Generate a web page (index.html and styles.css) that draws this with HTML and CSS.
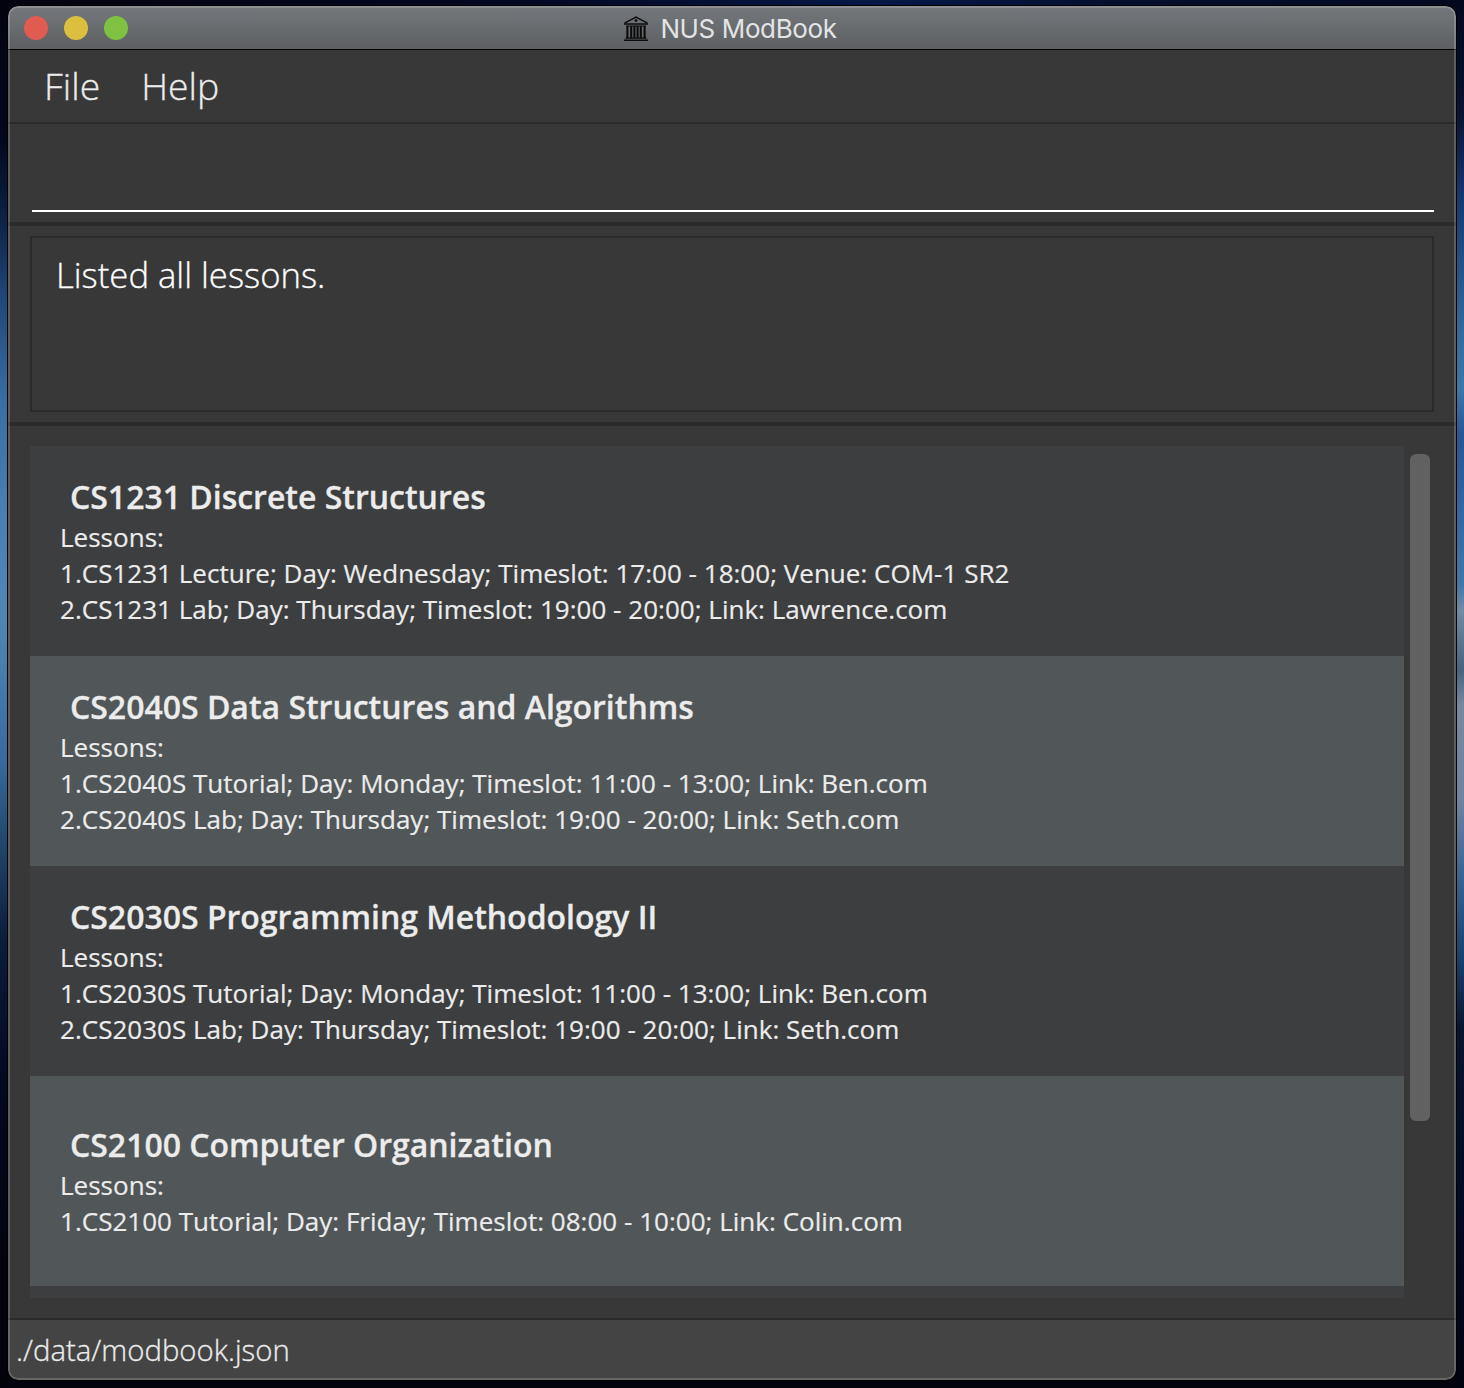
FILE: index.html
```
<!DOCTYPE html>
<html lang="en">
<head>
<meta charset="utf-8">
<title>NUS ModBook</title>
<link rel="stylesheet" href="styles.css">
</head>
<body>
<div class="window">
  <header class="titlebar">
    <div class="lights"><i class="light close"></i><i class="light minimise"></i><i class="light zoom"></i></div>
    <div class="caption">
      <svg class="logo" width="26" height="26" viewBox="0 0 26 26" fill="none" stroke="#0c0c0c">
        <path d="M1.5 7.2 13 1 24.5 7.2" stroke-width="1.5"/>
        <path d="M1 8h24" stroke-width="1.6"/>
        <circle cx="13" cy="4.6" r="1.4" fill="#0c0c0c" stroke="none"/>
        <path d="M3 10h20" stroke-width="1.1"/>
        <path d="M4.4 10v12M8.2 10v12M11.4 10v12M14.6 10v12M17.8 10v12M21.6 10v12" stroke-width="2.1"/>
        <path d="M2.5 22.1h21" stroke-width="1.2"/>
        <path d="M1 24.3h24" stroke-width="1.4"/>
      </svg>
      <span>NUS ModBook</span>
    </div>
  </header>
  <nav class="menu"><span>File</span><span>Help</span></nav>
  <section class="command"><div class="field"></div></section>
  <section class="result"><div class="message">Listed all lessons.</div></section>
  <main class="content">
    <div class="list">
      <article class="card"><h2>CS1231 Discrete Structures</h2><p>Lessons:</p><p>1.CS1231 Lecture; Day: Wednesday; Timeslot: 17:00 - 18:00; Venue: COM-1 SR2</p><p>2.CS1231 Lab; Day: Thursday; Timeslot: 19:00 - 20:00; Link: Lawrence.com</p></article>
      <article class="card"><h2>CS2040S Data Structures and Algorithms</h2><p>Lessons:</p><p>1.CS2040S Tutorial; Day: Monday; Timeslot: 11:00 - 13:00; Link: Ben.com</p><p>2.CS2040S Lab; Day: Thursday; Timeslot: 19:00 - 20:00; Link: Seth.com</p></article>
      <article class="card"><h2>CS2030S Programming Methodology II</h2><p>Lessons:</p><p>1.CS2030S Tutorial; Day: Monday; Timeslot: 11:00 - 13:00; Link: Ben.com</p><p>2.CS2030S Lab; Day: Thursday; Timeslot: 19:00 - 20:00; Link: Seth.com</p></article>
      <article class="card"><h2>CS2100 Computer Organization</h2><p>Lessons:</p><p>1.CS2100 Tutorial; Day: Friday; Timeslot: 08:00 - 10:00; Link: Colin.com</p></article>
      <article class="card"></article>
    </div>
    <div class="track"><div class="thumb"></div></div>
  </main>
  <footer class="status">./data/modbook.json</footer>
</div>
</body>
</html>
```
FILE: styles.css
```
* { box-sizing: border-box; }
body {
  margin: 0;
  width: 1464px;
  height: 1388px;
  padding: 6px 8px 8px;
  overflow: hidden;
  font-family: "Open Sans", "Noto Sans", sans-serif;
  background:
    linear-gradient(#03030f 0, #04081e 140px, #0b1e40 210px, #1c4573 290px, #3a6ea2 400px, #4a80b2 520px, #5186b4 620px, #386b9c 760px, #1d4568 850px, #0c1c3c 940px, #050a24 1060px, #03030f 1250px, #02030a) left / 8px 100% no-repeat,
    linear-gradient(#03081e 0, #071331 110px, #153a70 200px, #35699b 330px, #3e76a8 390px, #285594 435px, #3568a2 520px, #4377a5 585px, #6f8ca3 610px, #456480 670px, #75899f 705px, #6d84a2 800px, #37638e 880px, #17406a 960px, #07152f 1030px, #030a25 1200px, #020310) right / 8px 100% no-repeat,
    linear-gradient(90deg, #04030f, #030720 35%, #061747 60%, #040d2a 80%, #03081e) top / 100% 30px no-repeat,
    #02030c;
}
.window {
  position: relative;
  width: 1448px;
  height: 1374px;
  border-radius: 10px;
  overflow: hidden;
  display: flex;
  flex-direction: column;
  background: #383838;
  outline: 1px solid #000;
}
/* translucent rim around the whole window */
.window::after {
  content: "";
  position: absolute;
  inset: 0;
  border: 2px solid rgba(255, 255, 255, .19);
  border-radius: 10px;
  pointer-events: none;
}
.titlebar {
  height: 44px;
  flex: none;
  display: grid;
  grid-template-columns: 1fr auto 1fr;
  align-items: center;
  padding: 0 16px;
  background: linear-gradient(#74787c, #5d5f62);
  border-bottom: 1px solid #000;
}
.lights { display: flex; gap: 16px; }
.light { width: 24px; height: 24px; border-radius: 50%; }
.close { background: #e15b52; }
.minimise { background: #dcbf3e; }
.zoom { background: #7fc241; }
.caption {
  display: flex;
  align-items: center;
  gap: 11px;
  height: 43px;
  padding: 2px 4px 0 0;
  font: 26px/41px Inter, sans-serif;
  letter-spacing: -.38px;
  color: #e3e4e5;
}
.menu {
  height: 74px;
  flex: none;
  display: flex;
  gap: 41px;
  padding: 0 36px;
  border-bottom: 2px solid #2b2b2b;
  font-size: 37.33px;
  font-weight: 300;
  line-height: 72px;
  color: #ececec;
}
.menu, .message, .status { -webkit-text-stroke: .3px currentColor; }
.command {
  height: 102px;
  flex: none;
  padding: 0 22px 0 24px;
  border-bottom: 4px solid #2b2b2b;
}
.field { height: 88px; border-bottom: 2px solid #fff; }
.result {
  height: 200px;
  flex: none;
  padding: 10px 22px;
  border-bottom: 4px solid #2b2b2b;
}
.message {
  height: 176px;
  border: 2px solid #2b2b2b;
  padding: 12px 24px;
  font-size: 34.67px;
  font-weight: 300;
  line-height: 49px;
  color: #fff;
}
.content {
  flex: 1;
  min-height: 0;
  display: flex;
  gap: 6px;
  padding: 20px 26px 20px 22px;
}
.list { flex: 1; overflow: hidden; }
.card {
  height: 210px;
  padding: 0 30px;
  display: flex;
  flex-direction: column;
  justify-content: center;
  background: #3c3e3f;
  color: #ececec;
}
.card:nth-child(even) { background: #515658; }
.card h2 {
  margin: 0;
  padding-left: 10px;
  font-size: 32px;
  font-weight: 600;
  line-height: 44px;
  letter-spacing: -.01px;
  -webkit-text-stroke: .3px currentColor;
}
.card p {
  margin: 0;
  font-size: 26px;
  line-height: 36px;
  letter-spacing: .02px;
  white-space: nowrap;
  -webkit-text-stroke: .2px currentColor;
}
.track { width: 20px; padding-top: 8px; }
.thumb { height: 667px; border-radius: 6px; background: #616161; }
.status {
  height: 62px;
  flex: none;
  padding-left: 8px;
  border-top: 2px solid #2b2b2b;
  background: #444;
  font-size: 29.33px;
  font-weight: 300;
  line-height: 60px;
  color: #ececec;
}
```
